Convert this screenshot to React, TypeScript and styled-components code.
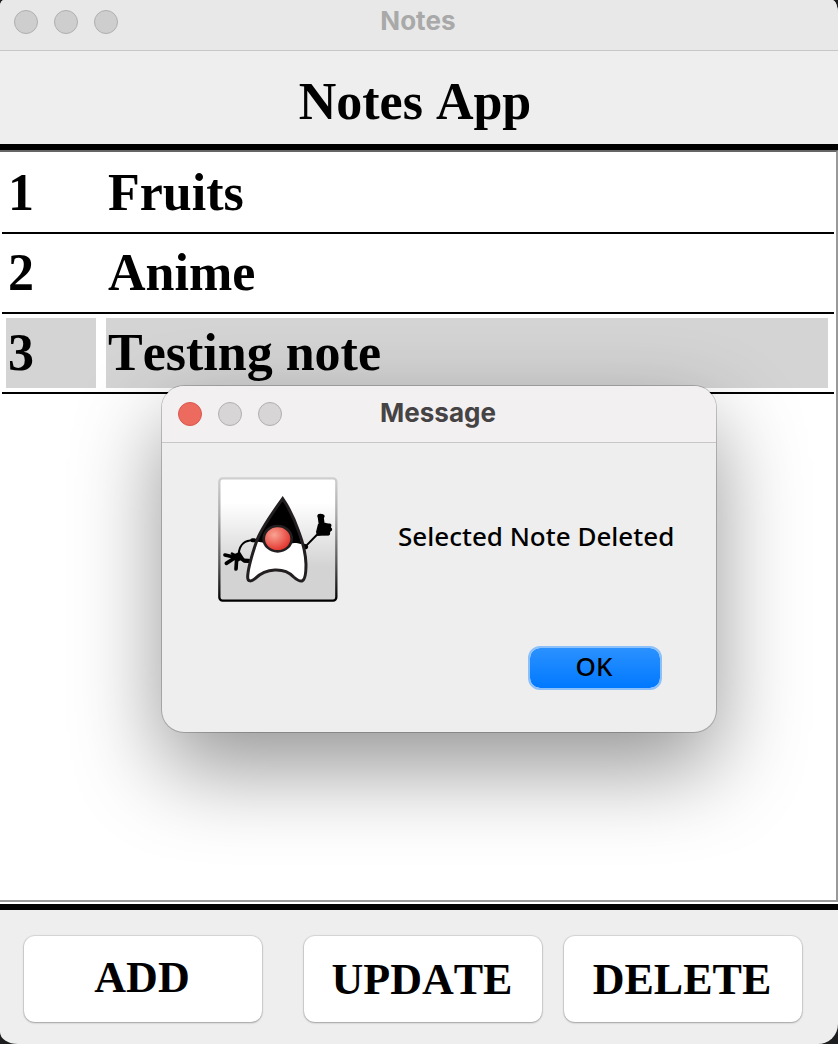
import React, { useState } from "react";
import styled, { createGlobalStyle, css } from "styled-components";

const GlobalStyle = createGlobalStyle`
  *, *::before, *::after { box-sizing: border-box; }
  body { margin: 0; background: #1c1d1e; font-kerning: none; }
`;

const serif = `"Liberation Serif", "Times New Roman", serif`;
const system = `Inter, "Liberation Sans", sans-serif`;
const lucida = `"Noto Sans", "Open Sans", sans-serif`;

const Window = styled.main`
  position: relative;
  display: flex;
  flex-direction: column;
  min-height: 100vh;
  overflow: hidden;
  background: #eeeeee;
  border-radius: 4px 6px 20px 18px / 6px 14px 20px 12px;
  color: #000;
`;

const TitleBar = styled.header<{ $active?: boolean }>`
  display: grid;
  grid-template-columns: 1fr auto 1fr;
  align-items: center;
  font-family: ${system};
  font-size: 26px;
  line-height: 30px;
  font-weight: 700;
  ${(p) =>
    p.$active
      ? css`
          height: 57px;
          padding: 0 18px 2px 16px;
          color: #454344;
          background: #f3f0f1;
          border-bottom: 1px solid #c8c7c7;
        `
      : css`
          height: 51px;
          padding: 0 16px 8px 14px;
          color: #a9a9a9;
          background: #e8e8e8;
          border-bottom: 1px solid #c6c6c6;
        `}
`;

const WindowTitle = styled.span``;

const Lights = styled.div`
  display: flex;
  gap: 16px;
  padding-top: 2px;
`;

const Light = styled.button<{ $red?: boolean }>`
  width: 24px;
  height: 24px;
  padding: 0;
  border-radius: 50%;
  border: 1px solid ${(p) => (p.$red ? "#d9574d" : "#b0afaf")};
  background: ${(p) => (p.$red ? "#ed6a5e" : "rgba(0, 0, 0, 0.11)")};
`;

const Heading = styled.h1`
  margin: 0;
  padding: 21px 8px 12px 0;
  font: 700 52px/60px ${serif};
  font-kerning: none;
  text-align: center;
`;

const NoteArea = styled.section`
  flex: 1;
  display: flex;
  flex-direction: column;
  padding-bottom: 2px;
  background: #fff;
  border-top: 6px solid #000;
  border-bottom: 6px solid #000;
`;

const NoteList = styled.ul`
  flex: 1;
  margin: 0;
  padding: 2px;
  list-style: none;
  border: solid #999;
  border-width: 2px 2px 2px 0;
  border-top-color: #666;
`;

const NoteRow = styled.li<{ $selected?: boolean }>`
  display: grid;
  grid-template-columns: 90px 1fr;
  gap: 10px;
  padding: 4px 6px 4px 4px;
  border-bottom: 2px solid #000;
  font: 700 52px/70px ${serif};
  font-kerning: none;

  > span {
    height: 70px;
    padding-left: 2px;
    background: ${(p) => (p.$selected ? "#d4d4d4" : "#fff")};
  }
`;

const Toolbar = styled.footer`
  display: flex;
  gap: 22px;
  padding: 26px 36px 22px 24px;
`;

const ToolButton = styled.button`
  flex: 1;
  height: 86px;
  padding: 2px 2px 0 0;
  border: 0;
  border-radius: 11px;
  background: #fff;
  box-shadow: 0 0 1px 1px rgba(0, 0, 0, 0.1), 0 1px 2px rgba(0, 0, 0, 0.25);
  color: #000;
  font: 700 44px/50px ${serif};
  font-kerning: none;

  &:first-child {
    margin-right: 20px;
    padding: 0 2px 2px 0;
  }
`;

const Dialog = styled.section`
  position: absolute;
  top: 386px;
  left: calc(50% - 257px);
  width: 554px;
  overflow: hidden;
  border-radius: 22px;
  background: #eeeeee;
  box-shadow: 0 0 0 1px rgba(0, 0, 0, 0.2), 0 36px 88px rgba(0, 0, 0, 0.42);
`;

const DialogBody = styled.div`
  display: flex;
  align-items: center;
  gap: 60px;
  padding: 34px 36px 0 56px;
`;

const Message = styled.p`
  margin: 0;
  padding-bottom: 8px;
  font: 500 26px/36px ${lucida};
  white-space: nowrap;
`;

const DialogActions = styled.div`
  display: flex;
  justify-content: flex-end;
  padding: 44px 54px 42px;
`;

const OkButton = styled.button`
  width: 134px;
  height: 44px;
  padding: 0 2px 4px 0;
  border: 2px solid #8cc0fa;
  border-radius: 12px;
  background: linear-gradient(#2b91ff, #0079ff) padding-box;
  color: #000;
  font: 500 26px/36px ${lucida};
`;

const Duke = () => (
  <svg width="120" height="125" viewBox="30 27 360 375" role="img" aria-label="Java">
    <defs>
      <linearGradient id="frame" x1="0" y1="0" x2="0" y2="1">
        <stop offset="0" stopColor="#cfcfcf" />
        <stop offset="0.3" stopColor="#aaa" />
        <stop offset="0.7" stopColor="#555" />
        <stop offset="1" stopColor="#000" />
      </linearGradient>
      <linearGradient id="panel" x1="0" y1="0" x2="0" y2="1">
        <stop offset="0.2" stopColor="#fff" />
        <stop offset="0.72" stopColor="#d3d3d3" />
      </linearGradient>
      <radialGradient id="nose" cx="0.38" cy="0.35" r="0.65">
        <stop offset="0" stopColor="#f9a493" />
        <stop offset="1" stopColor="#e2322c" />
      </radialGradient>
    </defs>
    <rect x="34" y="31" width="351" height="367" rx="10" fill="url(#panel)" stroke="url(#frame)" strokeWidth="7" />
    <g fill="none" stroke="#000" strokeLinecap="round" strokeLinejoin="round">
      <path d="M138 216C110 218 96 226 92 256" strokeWidth="6" />
      <path d="M133 217L139 217M109 278L121 279" strokeWidth="12" />
      <path d="M92 266L74 266L51 261M80 270L55 286M86 272L84 303M94 268L108 277L121 278" strokeWidth="11" />
      <path d="M82 262L72 257" strokeWidth="8" />
      <path d="M292 236L329 198" strokeWidth="6" />
      <path d="M290 234L294 237" strokeWidth="13" />
      <path d="M338 146L341 168L338 186" strokeWidth="18" />
      <path d="M334 144L344 145" strokeWidth="12" />
      <path d="M350 173L365 172M350 185L367 184M346 196L361 197" strokeWidth="11" />
    </g>
    <path d="M72 261L96 251L108 271L88 282Z" fill="#000" />
    <path d="M330 168L352 164L368 170L370 186L362 202L328 204L324 192Z" fill="#000" />
    <path
      d="M224 92C195 132 158 185 146 219C130 266 119 306 119 328C119 343 131 340 141 332C174 300 228 297 257 327C268 337 274 340 282 339C294 336 294 305 294 289C293 260 284 222 273 193C261 158 244 121 224 92Z"
      fill="#fff"
    />
    <path d="M224 90C195 130 158 185 144 221C160 222 168 222 180 232L238 232C250 223 263 223 281 229C270 180 243 119 224 90Z" fill="#000" />
    <path
      d="M224 92C195 132 158 185 146 219C130 266 119 306 119 328C119 343 131 340 141 332C174 300 228 297 257 327C268 337 274 340 282 339C294 336 294 305 294 289C293 260 284 222 273 193C261 158 244 121 224 92Z"
      fill="none"
      stroke="#231f20"
      strokeWidth="9"
    />
    <ellipse cx="209" cy="212" rx="42" ry="38" fill="url(#nose)" stroke="#231f20" strokeWidth="8" />
  </svg>
);

const notes = ["Fruits", "Anime", "Testing note"];

export default function App() {
  const [dialogOpen, setDialogOpen] = useState(true);
  const close = () => setDialogOpen(false);

  return (
    <>
      <GlobalStyle />
      <Window>
        <TitleBar>
          <Lights>
            <Light aria-label="Close" />
            <Light aria-label="Minimize" />
            <Light aria-label="Zoom" />
          </Lights>
          <WindowTitle>Notes</WindowTitle>
        </TitleBar>
        <Heading>Notes App</Heading>
        <NoteArea>
          <NoteList>
            {notes.map((note, i) => (
              <NoteRow key={note} $selected={i === 2}>
                <span>{i + 1}</span>
                <span>{note}</span>
              </NoteRow>
            ))}
          </NoteList>
        </NoteArea>
        <Toolbar>
          <ToolButton>ADD</ToolButton>
          <ToolButton>UPDATE</ToolButton>
          <ToolButton>DELETE</ToolButton>
        </Toolbar>
        {dialogOpen && (
          <Dialog role="dialog" aria-label="Message">
            <TitleBar $active>
              <Lights>
                <Light $red aria-label="Close message" onClick={close} />
                <Light aria-label="Minimize message" />
                <Light aria-label="Zoom message" />
              </Lights>
              <WindowTitle>Message</WindowTitle>
            </TitleBar>
            <DialogBody>
              <Duke />
              <Message>Selected Note Deleted</Message>
            </DialogBody>
            <DialogActions>
              <OkButton onClick={close}>OK</OkButton>
            </DialogActions>
          </Dialog>
        )}
      </Window>
    </>
  );
}
